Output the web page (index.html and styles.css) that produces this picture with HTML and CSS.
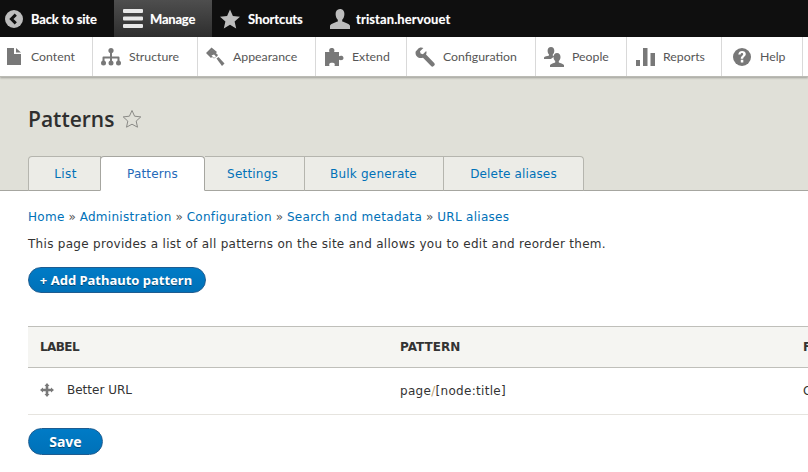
FILE: index.html
```html
<!DOCTYPE html>
<html lang="en">
<head>
<meta charset="utf-8">
<title>Patterns</title>
<link rel="stylesheet" href="styles.css">
</head>
<body>
<nav class="bar">
  <a class="bar-item back"><svg class="bar-icon" viewBox="0 0 18 18"><circle cx="9" cy="9" r="9" fill="#bdbdbd"/><path d="M10.800 4.600 6.400 9l4.400 4.400" fill="none" stroke="#0f0f0f" stroke-width="3"/></svg>Back to site</a>
  <a class="bar-item manage"><svg class="bar-icon burger" viewBox="0 0 20 19"><path d="M1 0h18a1 1 0 0 1 1 1v2a1 1 0 0 1-1 1H1a1 1 0 0 1-1-1V1a1 1 0 0 1 1-1zM1 7.500h18a1 1 0 0 1 1 1v2a1 1 0 0 1-1 1H1a1 1 0 0 1-1-1v-2a1 1 0 0 1 1-1zM1 15h18a1 1 0 0 1 1 1v2a1 1 0 0 1-1 1H1a1 1 0 0 1-1-1v-2a1 1 0 0 1 1-1z" fill="#e8e8e8"/></svg>Manage</a>
  <a class="bar-item shortcuts"><svg class="bar-icon star" viewBox="0 0 20 20"><path d="M10 .5l2.900 6.500 7.100.7-5.400 4.700 1.600 7-6.200-3.700-6.200 3.700 1.600-7L0 7.700l7.100-.7z" fill="#bdbdbd"/></svg>Shortcuts</a>
  <a class="bar-item user"><svg class="bar-icon person" viewBox="0 0 20 20"><path d="M10 0c3 0 4.400 2.200 4.400 5 0 2.600-1 4.600-2.200 5.800v1.600c2.500.9 7 2 7.800 4.400V20H0v-3.200c.8-2.400 5.300-3.500 7.800-4.400v-1.600C6.600 9.600 5.600 7.600 5.600 5 5.600 2.200 7 0 10 0z" fill="#bdbdbd"/></svg>tristan.hervouet</a>
</nav>
<nav class="tray">
  <a class="tray-item w1"><svg class="tray-icon" viewBox="0 0 20 20"><path d="M3 1h7v6h7v11H3zM12 1l5 4.500h-5z" fill="#787878"/></svg>Content</a>
  <a class="tray-item w2"><svg class="tray-icon" viewBox="0 0 20 20"><circle cx="10" cy="3.600" r="2.600" fill="#787878"/><path d="M9 5h2v4.500h6.500a1 1 0 0 1 1 1V15h-2v-3.500H11V15H9v-3.500H3.500V15h-2v-4.500a1 1 0 0 1 1-1H9z" fill="#787878"/><circle cx="2.500" cy="16" r="2.500" fill="#787878"/><circle cx="10" cy="16" r="2.500" fill="#787878"/><circle cx="17.500" cy="16" r="2.500" fill="#787878"/></svg>Structure</a>
  <a class="tray-item w3"><svg class="tray-icon" viewBox="0 0 20 20"><path d="M6.500.5 1 6l5 5 1.500-1.500L3.800 6 7 3l3.500 3.500L12 5z" fill="#787878"/><path d="M2.500 6.500 7 2.500l6 5.500-1 1.500-1 .5-2 1.500z" fill="#787878"/><path d="M6.500 8.500 9 11l2-1.500-2-2z" fill="#fff"/><path d="M11.500 11.500l2-1.500 6 6.500-2.500 2.500z" fill="#787878"/></svg>Appearance</a>
  <a class="tray-item w4"><svg class="tray-icon" viewBox="0 0 20 20"><path d="M1 5h4.500C4.800 3.500 5 1 7.800 1s3 2.500 2.300 4H15v4.300c1.400-.8 4.500-.8 4.500 1.700S16.400 13.500 15 12.700V19h-4.500c.6-1.600.5-3.300-2.500-3.300S5 17.400 5.500 19H1z" fill="#787878"/></svg>Extend</a>
  <a class="tray-item w5"><svg class="tray-icon" viewBox="0 0 20 20"><path d="M6 .5c1 0 1.800.2 2.400.6L5 4.300l.6 2.300 2.300.6 3.300-3.300c.5 1.300.4 2.600-.2 3.700l8.200 8.400c.8.800.8 1.800 0 2.500l-.6.600c-.8.700-1.700.7-2.500 0L8 10.700C5.700 11.500 3.500 11 2 9.500.700 8.200.2 6.300.7 4.500L3 2C3.800 1 4.800.5 6 .5z" fill="#787878"/></svg>Configuration</a>
  <a class="tray-item w6"><svg class="tray-icon" viewBox="0 0 20 20"><path d="M7 0c2.200 0 3.300 1.600 3.300 3.700 0 1.500-.6 3-1.500 3.800v1.300c.5.200 1 .4 1.400.6-1.300 1-2 1.500-3.200 2.600L0 12v-1.500c.6-1 3.200-1.400 5-2V7.500C4.200 6.700 3.600 5.200 3.600 3.700 3.600 1.600 4.800 0 7 0z" fill="#787878"/><path d="M13 6c2.300 0 3.500 1.700 3.500 4 0 1.700-.6 3.200-1.700 4.100v1.400c1.600.5 4.200 1.200 5.200 2.500v2H6v-2c1-1.300 3.600-2 5.200-2.500v-1.400C10.100 13.200 9.500 11.700 9.500 10c0-2.300 1.200-4 3.500-4z" fill="#787878"/></svg>People</a>
  <a class="tray-item w7"><svg class="tray-icon" viewBox="0 0 20 20"><path d="M1 13h4v6H1zM8 1h4.500v18H8zM15.500 6H20v13h-4.500z" fill="#787878"/></svg>Reports</a>
  <a class="tray-item w8"><svg class="tray-icon" viewBox="0 0 20 20"><circle cx="10" cy="10" r="9" fill="#787878"/><path d="M6.300 7.500C6.500 5 8.300 4 10.100 4c2.100 0 3.700 1.200 3.700 3.100 0 2.600-2.600 2.600-2.600 4.600H8.800c0-3 2.400-3 2.400-4.500 0-.7-.5-1.100-1.200-1.100-.9 0-1.300.6-1.400 1.400zM8.800 12.800h2.500v2.700H8.800z" fill="#fff"/></svg>Help</a>
</nav>
<header class="head">
  <h1 class="title">Patterns<svg class="title-star" viewBox="0 0 20 20"><path d="M10 1.500l2.600 5.700 6.200.7-4.600 4.200 1.300 6.100L10 15.200l-5.500 3 1.300-6.100L1.200 7.900l6.200-.7z" fill="none" stroke="#8a8a86"/></svg></h1>
  <ul class="tabs">
    <li class="tab t1">List</li>
    <li class="tab t2 active">Patterns</li>
    <li class="tab t3">Settings</li>
    <li class="tab t4">Bulk generate</li>
    <li class="tab t5">Delete aliases</li>
  </ul>
</header>
<main class="content">
  <p class="crumbs"><a>Home</a> » <a>Administration</a> » <a>Configuration</a> » <a>Search and metadata</a> » <a>URL aliases</a></p>
  <p class="intro">This page provides a list of all patterns on the site and allows you to edit and reorder them.</p>
  <a class="btn add">+ Add Pathauto pattern</a>
  <table class="grid">
    <thead><tr><th class="c1 th-label">LABEL</th><th class="c2">PATTERN</th><th class="c3">FILTERS</th></tr></thead>
    <tbody><tr>
      <td class="c1"><span class="label-cell"><svg class="drag" viewBox="0 0 14 14"><path d="M7 0l2.500 3H8.300v2.700H11V4.500L14 7l-3 2.500V8.300H8.300V11h1.200L7 14l-2.500-3h1.200V8.300H3v1.200L0 7l3-2.500v1.200h2.700V3H4.500z" fill="#787878"/></svg>Better URL</span></td>
      <td class="c2 pattern">page<span class="slash">/</span>[node:title]</td>
      <td class="c3">Content</td>
    </tr></tbody>
  </table>
  <a class="btn save">Save</a>
</main>
</body>
</html>
```
FILE: styles.css
```css
html, body { margin: 0; padding: 0; height: 472px; overflow: hidden; background: #fff; }
body { font-family: "DejaVu Sans", sans-serif; font-size: 12px; color: #333; }
a { color: #0071b8; text-decoration: none; }

.bar { display: flex; height: 37px; background: #0f0f0f; font-family: "Lato", sans-serif; font-weight: 700; font-size: 13px; }
.bar-item { display: flex; align-items: center; color: #fff; height: 37px; text-shadow: 0 0 1px rgba(255,255,255,.4); }
.bar-icon { width: 18px; height: 18px; flex: none; }
.back { padding: 0 0 0 5px; width: 114px; box-sizing: border-box; gap: 8px; letter-spacing: -.15px; }
.manage { width: 98px; box-sizing: border-box; padding-left: 9px; gap: 7px; background: linear-gradient(#4e4e4e, #2e2e2e); letter-spacing: -.2px; }
.burger { width: 20px; height: 19px; }
.shortcuts { width: 118px; box-sizing: border-box; padding-left: 8px; gap: 8px; letter-spacing: -.1px; }
.star { width: 20px; height: 20px; }
.user { gap: 6px; letter-spacing: .1px; }
.person { width: 20px; height: 20px; }

.tray { display: flex; height: 39px; background: #fff; border-bottom: 1px solid #bbbbb4; box-shadow: 0 1px 2px rgba(0,0,0,.3); font-family: "Lato", sans-serif; font-size: 12.3px; position: relative; }
.tray-item { display: flex; align-items: center; gap: 8px; box-sizing: border-box; height: 39px; padding-left: 8px; color: #565656; border-right: 1px solid #d9d9d9; }
.tray-icon { width: 20px; height: 20px; flex: none; }
.w1 { width: 93px; padding-left: 4px; gap: 7px; }
.w2 { width: 105px; }
.w3 { width: 118px; padding-left: 7px; }
.w4 { width: 91px; }
.w5 { width: 129px; }
.w6 { width: 91px; }
.w7 { width: 95px; }
.w8 { width: 81px; padding-left: 10px; }

.head { box-sizing: border-box; height: 114px; background: #e0e0d8; padding: 0 0 0 28px; border-bottom: 1px solid #a6a6a0; display: flex; flex-direction: column; justify-content: flex-end; }
.title { display: flex; align-items: center; gap: 8px; margin: 0 0 24px; font-family: "Open Sans", sans-serif; font-size: 21px; font-weight: 600; color: #2f2f2f; line-height: 26px; }
.title-star { width: 20px; height: 20px; }
.tabs { display: flex; list-style: none; margin: 0 0 -1px; padding: 0; height: 35px; }
.tab { box-sizing: border-box; height: 35px; display: flex; align-items: center; justify-content: center; background: #ecece7; color: #0071b8; font-size: 12px; letter-spacing: .2px; border: 1px solid #b5b5ae; border-left: 0; border-bottom: 1px solid #a6a6a0; }
.t1 { width: 73px; border-left: 1px solid #b5b5ae; border-top-left-radius: 4px; padding-left: 2px; letter-spacing: .4px; }
.t2 { width: 105px; }
.t3 { width: 100px; padding-right: 4px; }
.t4 { width: 139px; padding-right: 1px; }
.t5 { width: 140px; border-top-right-radius: 4px; letter-spacing: .15px; }
.tab.active { background: #fff; border-top-left-radius: 4px; border-top-right-radius: 4px; margin-left: -1px; border: 1px solid #a6a6a0; border-bottom-color: #fff; color: #2369b8; }

.content { padding: 17px 0 0 28px; width: 1100px; }
.crumbs { margin: 0; font-size: 12px; line-height: 18px; color: #555; }
.crumbs a { letter-spacing: .3px; }
.intro { margin: 9px 0 0; font-size: 12px; line-height: 18px; color: #333; letter-spacing: .29px; }
.btn { display: flex; align-items: center; justify-content: center; box-sizing: border-box; border-radius: 20px; border: 1px solid #1e5c90; background: linear-gradient(#007bc6, #0071b8); color: #fff; font-weight: 700; text-shadow: 0 1px 0 rgba(0,0,0,.4); font-size: 13px; font-family: "Noto Sans", sans-serif; }
.add { width: 178px; height: 26px; margin-top: 14px; padding-right: 2px; }
.save { width: 75px; height: 27px; margin-top: 13px; font-size: 14px; }

.grid { border-collapse: collapse; margin-top: 33px; table-layout: fixed; width: 1000px; }
.grid th { background: #f5f5f2; border-top: 1px solid #bfbfba; border-bottom: 1px solid #bfbfba; height: 40px; padding: 0 12px; text-align: left; font-size: 12px; font-weight: 700; color: #333; }
.grid .th-label { letter-spacing: -.6px; }
.grid td { height: 46px; padding: 0 12px; border-bottom: 1px solid #e6e4df; font-size: 12px; vertical-align: middle; }
.c1 { width: 336px; }
.c2 { width: 379px; }
.grid .pattern { letter-spacing: .3px; }
.label-cell { display: flex; align-items: center; gap: 13px; margin-top: -2px; }
.drag { width: 14px; height: 14px; flex: none; }
.slash { color: #c0a070; }
```
